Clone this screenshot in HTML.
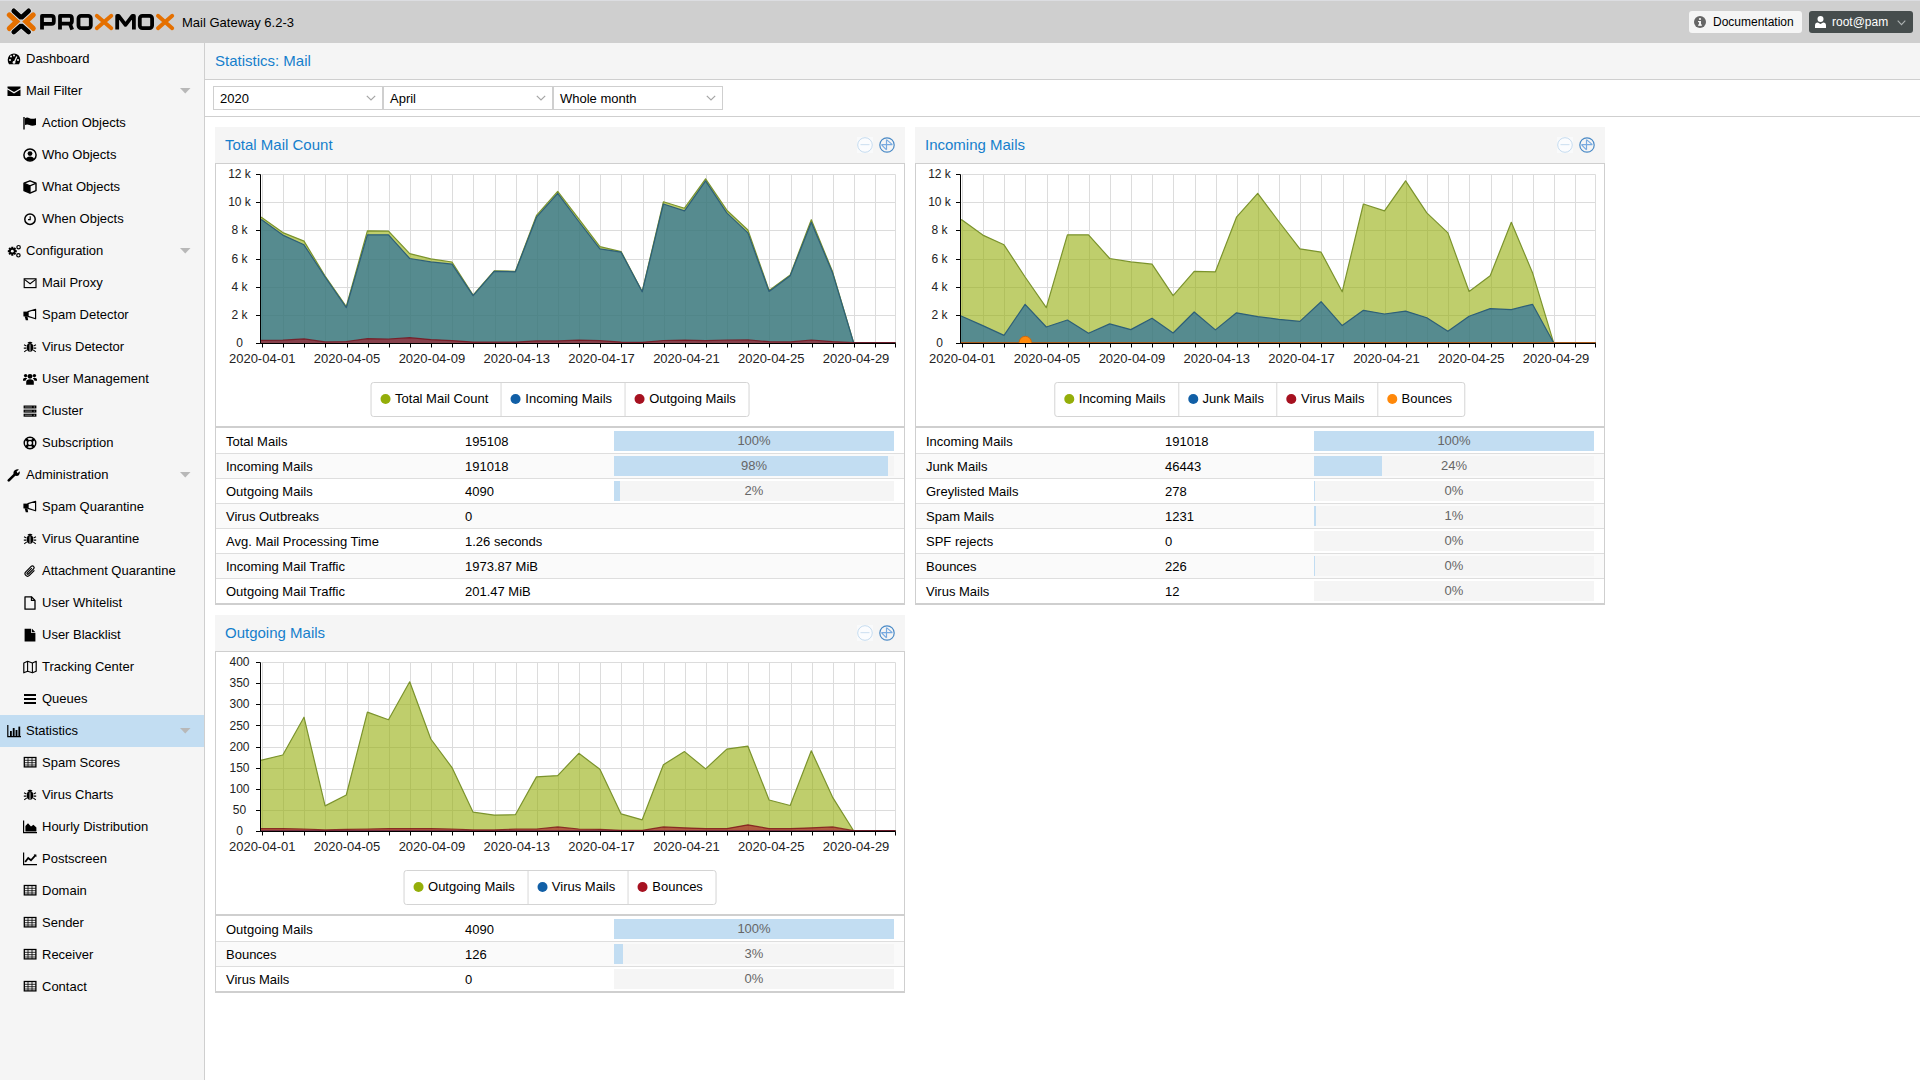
<!DOCTYPE html>
<html><head><meta charset="utf-8"><title>Proxmox Mail Gateway</title><style>
*{box-sizing:border-box}
html,body{margin:0;padding:0;width:1920px;height:1080px;overflow:hidden;background:#fff;font-family:"Liberation Sans", sans-serif;font-size:13px;color:#000}
#hdr{position:absolute;left:0;top:0;width:1920px;height:43px;background:#cfcfcf;border-top:1px solid #dcdde1}
#ver{position:absolute;left:182px;top:14px;font-size:13px;color:#000;line-height:16px}
.hbtn{position:absolute;top:10px;height:22px;border-radius:3px;font-size:12px;line-height:22px}
#doc{left:1689px;width:113px;background:#f5f5f5;color:#000}
#user{left:1809px;width:104px;background:#464d4d;color:#fff}
#side{position:absolute;left:0;top:43px;width:205px;height:1037px;background:#f5f5f5;border-right:1px solid #cfcfcf}
.nr{position:absolute;left:0;width:204px;height:32px}
.nr.sel{background:#c2ddf2}
.ni{position:absolute;top:9px}
.nt{position:absolute;top:8px;line-height:16px;white-space:nowrap}
.exp{position:absolute;left:180px;top:13px}
#ttl{position:absolute;left:205px;top:43px;width:1715px;height:37px;background:#f5f5f5;border-bottom:1px solid #cfcfcf}
#ttl span{position:absolute;left:10px;top:9px;font-size:15px;line-height:18px;color:#157fcc}
#tb{position:absolute;left:205px;top:80px;width:1715px;height:37px;background:#fff;border-bottom:1px solid #cfcfcf}
.cb{position:absolute;top:6px;width:170px;height:24px;border:1px solid #cfcfcf;background:#fff}
.cb span{position:absolute;left:6px;top:4px;line-height:16px;font-size:13px}
.cb svg{position:absolute;right:6px;top:7.5px}
.panel{position:absolute;width:690px}
.ph{position:relative;height:36px;background:#f5f5f5}
.pt{position:absolute;left:10px;top:9px;font-size:15px;line-height:18px;color:#157fcc;white-space:nowrap}
.tool{position:absolute;top:10px}
.pb1{position:relative;height:263px;border:1px solid #cfcfcf;border-bottom:none}
.legend{position:absolute;left:50%;transform:translateX(-50%);height:35px;border:1px solid #d4d4d4;border-radius:3px;display:flex;white-space:nowrap;background:#fff}
.li{height:33px;line-height:31px;padding:0 12.6px 0 9px;border-left:1px solid #d8d8d8;font-size:13px;color:#000}
.li.first{border-left:none}
.dot{display:inline-block;width:10px;height:10px;border-radius:50%;margin-right:4.5px;vertical-align:-1px}
.tbl{border:1px solid #cfcfcf;border-top:2px solid #cfcfcf;border-bottom:2px solid #cfcfcf}
.tr{position:relative;height:25px;border-top:1px solid #dedede;background:#fff}
.tr:first-child{border-top:none;height:25px}
.tr:first-child .c1,.tr:first-child .c2{top:6px}
.tr:first-child .pb{top:3px}
.tr.alt{background:#fafafa}
.c1{position:absolute;left:10px;top:5px;line-height:15px;white-space:nowrap}
.c2{position:absolute;left:249px;top:5px;line-height:15px;white-space:nowrap}
.pb{position:absolute;left:398px;top:2px;width:280px;height:20px;background:#f5f5f5}
.pbf{position:absolute;left:0;top:0;height:20px;background:#c2ddf2}
.pbt{position:absolute;left:0;top:0;width:280px;text-align:center;line-height:20px;color:#666;font-size:13px}
</style></head>
<body>
<div id="hdr"><svg style="position:absolute;left:0;top:-1px" width="180" height="43" viewBox="0 0 180 43"><path d="M9.4,14.9L16.6,21.6L9.4,28.4M33.2,14.9L26.0,21.6L33.2,28.4" stroke="#e57000" stroke-width="5.2" fill="none" stroke-linecap="round" stroke-linejoin="miter" stroke-miterlimit="10"/><path d="M13.8,10.9L21.2,17.8L28.6,10.9M13.8,32.0L21.2,25.5L28.6,32.0" stroke="#e6e6e6" stroke-width="6.0" fill="none" stroke-linecap="round" stroke-linejoin="bevel"/><path d="M13.8,10.9L21.2,17.8L28.6,10.9M13.8,32.0L21.2,25.5L28.6,32.0" stroke="#000" stroke-width="4.8" fill="none" stroke-linecap="round" stroke-linejoin="bevel"/><path d="M42,29.6V15.9H51.4Q53.8,15.9 53.8,18.3V21.5Q53.8,23.9 51.4,23.9H42" stroke="#000" stroke-width="3.8" fill="none" stroke-linejoin="round"/><path d="M60,29.6V15.9H69.5Q71.9,15.9 71.9,18.3V21.3Q71.9,23.6 69.5,23.6H61.5L69.8,23.6L72.2,29.6" stroke="#000" stroke-width="3.8" fill="none" stroke-linejoin="round"/><rect x="78.5" y="15.9" width="12.3" height="12.2" rx="2.6" stroke="#000" stroke-width="3.8" fill="none" stroke-linejoin="round"/><path d="M96.8,15.8L111.3,28.2M111.3,15.8L96.8,28.2" stroke="#e57000" stroke-width="3.9" stroke-linecap="round"/><path d="M117.2,29.6V15.9H118.6L125.5,24.8L132.4,15.9H133.9V29.6" stroke="#000" stroke-width="3.8" fill="none" stroke-linejoin="round"/><rect x="139.8" y="15.9" width="12.3" height="12.2" rx="2.6" stroke="#000" stroke-width="3.8" fill="none" stroke-linejoin="round"/><path d="M158,15.8L172.2,28.2M172.2,15.8L158,28.2" stroke="#e57000" stroke-width="3.9" stroke-linecap="round"/></svg><span id="ver">Mail Gateway 6.2-3</span>
<div class="hbtn" id="doc"><svg style="position:absolute;left:5px;top:5px" width="12" height="12" viewBox="0 0 12 12"><circle cx="6" cy="6" r="6" fill="#666"/><rect x="5" y="5" width="2" height="4.5" fill="#f5f5f5"/><rect x="4" y="8.5" width="4" height="1.2" fill="#f5f5f5"/><rect x="4" y="5" width="2" height="1.2" fill="#f5f5f5"/><circle cx="6" cy="3" r="1.1" fill="#f5f5f5"/></svg><span style="position:absolute;left:24px;top:0">Documentation</span></div>
<div class="hbtn" id="user"><svg style="position:absolute;left:6px;top:5px" width="11" height="12" viewBox="0 0 11 12"><circle cx="5.5" cy="3" r="3" fill="#fff"/><path d="M0,12V9.5Q0,6.8 2.8,6.6L5.5,8L8.2,6.6Q11,6.8 11,9.5V12Z" fill="#fff"/></svg><span style="position:absolute;left:23px;top:0">root@pam</span><svg style="position:absolute;left:88px;top:9px" width="9" height="6" viewBox="0 0 9 6"><path d="M0.7,0.7L4.5,4.6L8.3,0.7" stroke="#aeb3b3" stroke-width="1.1" fill="none"/></svg></div>
</div>
<div id="side"><div class="nr" style="top:0px"><svg class="ni" style="left:7px" width="14" height="14" viewBox="0 0 14 14"><path d="M7,1.5A6.3,6.3 0 0 0 0.7,7.8Q0.7,10.5 2,12.2H12Q13.3,10.5 13.3,7.8A6.3,6.3 0 0 0 7,1.5Z" fill="#000"/><circle cx="3" cy="8" r="1" fill="#f5f5f5"/><circle cx="4" cy="4.6" r="1" fill="#f5f5f5"/><circle cx="7" cy="3.4" r="1" fill="#f5f5f5"/><circle cx="11" cy="8" r="1" fill="#f5f5f5"/><path d="M7.2,10.5L9.8,4.6" stroke="#f5f5f5" stroke-width="1.3"/><circle cx="7" cy="10.4" r="1.4" fill="#f5f5f5"/></svg><span class="nt" style="left:26px">Dashboard</span></div><div class="nr" style="top:32px"><svg class="ni" style="left:7px" width="14" height="14" viewBox="0 0 14 14"><path d="M0.5,2.5H13.5V4.2L7,8L0.5,4.2Z" fill="#000"/><path d="M0.5,5.6L7,9.4L13.5,5.6V12H0.5Z" fill="#000"/></svg><span class="nt" style="left:26px">Mail Filter</span><svg class="exp" width="11" height="6" viewBox="0 0 11 6"><path d="M0,0H10.5L5.25,5.6Z" fill="#b8b8b8"/></svg></div><div class="nr" style="top:64px"><svg class="ni" style="left:23px" width="14" height="14" viewBox="0 0 14 14"><path d="M1,1V13.5" stroke="#000" stroke-width="1.4"/><path d="M2,2.2Q4,1 6.5,2.2Q9,3.4 13,2.2V9Q9,10.3 6.5,9Q4,7.8 2,9Z" fill="#000"/></svg><span class="nt" style="left:42px">Action Objects</span></div><div class="nr" style="top:96px"><svg class="ni" style="left:23px" width="14" height="14" viewBox="0 0 14 14"><circle cx="7" cy="7" r="6.1" fill="none" stroke="#000" stroke-width="1.5"/><circle cx="7" cy="5.6" r="2.4" fill="#000"/><path d="M2.8,11.3Q3.6,8.6 7,8.6Q10.4,8.6 11.2,11.3Q9.5,12.8 7,12.8Q4.5,12.8 2.8,11.3Z" fill="#000"/></svg><span class="nt" style="left:42px">Who Objects</span></div><div class="nr" style="top:128px"><svg class="ni" style="left:23px" width="14" height="14" viewBox="0 0 14 14"><path d="M7,0.8L13,3.2V10.6L7,13.2L1,10.6V3.2Z" fill="none" stroke="#000" stroke-width="1.4" stroke-linejoin="round"/><path d="M1.3,3.4L7,5.8L12.7,3.4M7,5.8V13" stroke="#000" stroke-width="1.3" fill="none"/><path d="M1,3.5L7,6V13L1,10.5Z" fill="#000"/></svg><span class="nt" style="left:42px">What Objects</span></div><div class="nr" style="top:160px"><svg class="ni" style="left:23px" width="14" height="14" viewBox="0 0 14 14"><circle cx="7" cy="7.2" r="5.2" fill="none" stroke="#000" stroke-width="1.5"/><path d="M7.2,4.2V7.6H5" stroke="#000" stroke-width="1.2" fill="none"/></svg><span class="nt" style="left:42px">When Objects</span></div><div class="nr" style="top:192px"><svg class="ni" style="left:7px" width="14" height="14" viewBox="0 0 14 14"><path d="M9.79,6.20L9.79,8.20L8.29,8.33L8.21,8.52L9.18,9.66L7.76,11.08L6.62,10.11L6.43,10.19L6.30,11.69L4.30,11.69L4.17,10.19L3.98,10.11L2.84,11.08L1.42,9.66L2.39,8.52L2.31,8.33L0.81,8.20L0.81,6.20L2.31,6.07L2.39,5.88L1.42,4.74L2.84,3.32L3.98,4.29L4.17,4.21L4.30,2.71L6.30,2.71L6.43,4.21L6.62,4.29L7.76,3.32L9.18,4.74L8.21,5.88L8.29,6.07Z" fill="#000"/><circle cx="5.3" cy="7.2" r="1.4" fill="#f5f5f5"/><circle cx="11.6" cy="3.2" r="1.7" fill="none" stroke="#000" stroke-width="1.2"/><circle cx="11.4" cy="11.3" r="1.7" fill="none" stroke="#000" stroke-width="1.2"/></svg><span class="nt" style="left:26px">Configuration</span><svg class="exp" width="11" height="6" viewBox="0 0 11 6"><path d="M0,0H10.5L5.25,5.6Z" fill="#b8b8b8"/></svg></div><div class="nr" style="top:224px"><svg class="ni" style="left:23px" width="14" height="14" viewBox="0 0 14 14"><rect x="1.2" y="2.8" width="11.8" height="8.8" fill="none" stroke="#000" stroke-width="1.15"/><path d="M1.4,3.4L7.1,7.8L12.8,3.4" stroke="#000" stroke-width="1.1" fill="none"/></svg><span class="nt" style="left:42px">Mail Proxy</span></div><div class="nr" style="top:256px"><svg class="ni" style="left:23px" width="14" height="14" viewBox="0 0 14 14"><path d="M5,3.6L12.6,1.3V10.8L5,8.4Z" fill="none" stroke="#000" stroke-width="1.2" stroke-linejoin="round"/><path d="M0.4,3.6H5.2V8.4H0.4Z" fill="#000"/><path d="M1.6,8.2H4.4L5.2,12.2H2.8Z" fill="#000"/></svg><span class="nt" style="left:42px">Spam Detector</span></div><div class="nr" style="top:288px"><svg class="ni" style="left:23px" width="14" height="14" viewBox="0 0 14 14"><ellipse cx="7" cy="7.4" rx="3.2" ry="4.3" fill="#000"/><path d="M4.3,3.1Q7,0.2 9.7,3.1Z" fill="#000"/><path d="M1,4.8L3.5,5.9M13,4.8L10.5,5.9M0.8,8.1H3.5M13.2,8.1H10.5M1.2,11.9L3.8,9.9M12.8,11.9L10.2,9.9" stroke="#000" stroke-width="1.1"/><path d="M7,4.4V11.4" stroke="#f5f5f5" stroke-width="0.8"/></svg><span class="nt" style="left:42px">Virus Detector</span></div><div class="nr" style="top:320px"><svg class="ni" style="left:23px" width="14" height="14" viewBox="0 0 14 14"><circle cx="7" cy="4.3" r="2.4" fill="#000"/><circle cx="2.6" cy="3.6" r="1.7" fill="#000"/><circle cx="11.4" cy="3.6" r="1.7" fill="#000"/><path d="M3.2,12.8V10Q3.2,7.2 7,7.2Q10.8,7.2 10.8,10V12.8Z" fill="#000"/><path d="M0,8.8V7.5Q0,5.8 2.6,5.8Q3.8,5.8 4.2,6.5Q2.6,7.5 2.5,8.8Z" fill="#000"/><path d="M14,8.8V7.5Q14,5.8 11.4,5.8Q10.2,5.8 9.8,6.5Q11.4,7.5 11.5,8.8Z" fill="#000"/></svg><span class="nt" style="left:42px">User Management</span></div><div class="nr" style="top:352px"><svg class="ni" style="left:23px" width="14" height="14" viewBox="0 0 14 14"><rect x="0.6" y="1.5" width="12.8" height="3" fill="#000"/><rect x="0.6" y="5.6" width="12.8" height="3" fill="#000"/><rect x="0.6" y="9.7" width="12.8" height="3" fill="#000"/><path d="M1.8,3H9M1.8,7.1H9M1.8,11.2H9" stroke="#888" stroke-width="0.9"/><circle cx="11.3" cy="3" r="0.7" fill="#888"/><circle cx="11.3" cy="7.1" r="0.7" fill="#888"/><circle cx="11.3" cy="11.2" r="0.7" fill="#888"/></svg><span class="nt" style="left:42px">Cluster</span></div><div class="nr" style="top:384px"><svg class="ni" style="left:23px" width="14" height="14" viewBox="0 0 14 14"><circle cx="7" cy="7" r="5.8" fill="none" stroke="#000" stroke-width="1.4"/><circle cx="7" cy="7" r="2.6" fill="none" stroke="#000" stroke-width="1.4"/><path d="M2.9,2.9L5.2,5.2M11.1,2.9L8.8,5.2M2.9,11.1L5.2,8.8M11.1,11.1L8.8,8.8" stroke="#000" stroke-width="2.6"/></svg><span class="nt" style="left:42px">Subscription</span></div><div class="nr" style="top:416px"><svg class="ni" style="left:7px" width="14" height="14" viewBox="0 0 14 14"><path d="M1.8,12.4L7.6,6.6" stroke="#000" stroke-width="2.6" stroke-linecap="round"/><path d="M6.6,6.2Q5.8,2.5 9.2,1.4Q10.8,1 12,1.6L9.6,3.6L10.6,5.2L12.6,3.3Q13.4,5.5 12,7Q10.5,8.5 8,7.6Z" fill="#000"/></svg><span class="nt" style="left:26px">Administration</span><svg class="exp" width="11" height="6" viewBox="0 0 11 6"><path d="M0,0H10.5L5.25,5.6Z" fill="#b8b8b8"/></svg></div><div class="nr" style="top:448px"><svg class="ni" style="left:23px" width="14" height="14" viewBox="0 0 14 14"><path d="M5,3.6L12.6,1.3V10.8L5,8.4Z" fill="none" stroke="#000" stroke-width="1.2" stroke-linejoin="round"/><path d="M0.4,3.6H5.2V8.4H0.4Z" fill="#000"/><path d="M1.6,8.2H4.4L5.2,12.2H2.8Z" fill="#000"/></svg><span class="nt" style="left:42px">Spam Quarantine</span></div><div class="nr" style="top:480px"><svg class="ni" style="left:23px" width="14" height="14" viewBox="0 0 14 14"><ellipse cx="7" cy="7.4" rx="3.2" ry="4.3" fill="#000"/><path d="M4.3,3.1Q7,0.2 9.7,3.1Z" fill="#000"/><path d="M1,4.8L3.5,5.9M13,4.8L10.5,5.9M0.8,8.1H3.5M13.2,8.1H10.5M1.2,11.9L3.8,9.9M12.8,11.9L10.2,9.9" stroke="#000" stroke-width="1.1"/><path d="M7,4.4V11.4" stroke="#f5f5f5" stroke-width="0.8"/></svg><span class="nt" style="left:42px">Virus Quarantine</span></div><div class="nr" style="top:512px"><svg class="ni" style="left:23px" width="14" height="14" viewBox="0 0 14 14"><path d="M11.4,6.4L6.4,11.4Q4.6,13.2 2.8,11.4Q1,9.6 2.8,7.8L8.2,2.4Q9.4,1.2 10.6,2.4Q11.8,3.6 10.6,4.8L5.4,10Q4.8,10.6 4.2,10Q3.6,9.4 4.2,8.8L8.8,4.2" fill="none" stroke="#000" stroke-width="1.2"/></svg><span class="nt" style="left:42px">Attachment Quarantine</span></div><div class="nr" style="top:544px"><svg class="ni" style="left:23px" width="14" height="14" viewBox="0 0 14 14"><path d="M2,0.8H8.4L12,4.4V13.2H2Z" fill="none" stroke="#000" stroke-width="1.3" stroke-linejoin="round"/><path d="M8.4,0.8V4.4H12" fill="none" stroke="#000" stroke-width="1.1"/></svg><span class="nt" style="left:42px">User Whitelist</span></div><div class="nr" style="top:576px"><svg class="ni" style="left:23px" width="14" height="14" viewBox="0 0 14 14"><path d="M1.6,0.8H8.2V5H12.4V13.4H1.6Z" fill="#000"/><path d="M9,0.8L12.4,4.2H9Z" fill="#000"/></svg><span class="nt" style="left:42px">User Blacklist</span></div><div class="nr" style="top:608px"><svg class="ni" style="left:23px" width="14" height="14" viewBox="0 0 14 14"><path d="M0.8,3L4.6,1.3L9.4,3L13.2,1.3V11.2L9.4,12.8L4.6,11.2L0.8,12.8Z" fill="none" stroke="#000" stroke-width="1.2" stroke-linejoin="round"/><path d="M4.6,1.5V11M9.4,3V12.6" stroke="#000" stroke-width="1.1"/></svg><span class="nt" style="left:42px">Tracking Center</span></div><div class="nr" style="top:640px"><svg class="ni" style="left:23px" width="14" height="14" viewBox="0 0 14 14"><path d="M1,3H13M1,7H13M1,11H13" stroke="#000" stroke-width="2"/></svg><span class="nt" style="left:42px">Queues</span></div><div class="nr sel" style="top:672px"><svg class="ni" style="left:7px" width="14" height="14" viewBox="0 0 14 14"><path d="M0.8,1V12.7H14" stroke="#000" stroke-width="1.2" fill="none"/><rect x="3" y="7" width="1.8" height="5" fill="#000"/><rect x="5.8" y="4" width="1.8" height="8" fill="#000"/><rect x="8.6" y="6" width="1.8" height="6" fill="#000"/><rect x="11.4" y="2.6" width="1.8" height="9.4" fill="#000"/></svg><span class="nt" style="left:26px">Statistics</span><svg class="exp" width="11" height="6" viewBox="0 0 11 6"><path d="M0,0H10.5L5.25,5.6Z" fill="#b8b8b8"/></svg></div><div class="nr" style="top:704px"><svg class="ni" style="left:23px" width="14" height="14" viewBox="0 0 14 14"><rect x="1.3" y="1.5" width="11.6" height="9.4" fill="none" stroke="#000" stroke-width="1.3"/><path d="M1.3,4.3H12.9M1.3,6.7H12.9M1.3,9H12.9M5,1.5V10.9M9,1.5V10.9" stroke="#000" stroke-width="0.8"/></svg><span class="nt" style="left:42px">Spam Scores</span></div><div class="nr" style="top:736px"><svg class="ni" style="left:23px" width="14" height="14" viewBox="0 0 14 14"><ellipse cx="7" cy="7.4" rx="3.2" ry="4.3" fill="#000"/><path d="M4.3,3.1Q7,0.2 9.7,3.1Z" fill="#000"/><path d="M1,4.8L3.5,5.9M13,4.8L10.5,5.9M0.8,8.1H3.5M13.2,8.1H10.5M1.2,11.9L3.8,9.9M12.8,11.9L10.2,9.9" stroke="#000" stroke-width="1.1"/><path d="M7,4.4V11.4" stroke="#f5f5f5" stroke-width="0.8"/></svg><span class="nt" style="left:42px">Virus Charts</span></div><div class="nr" style="top:768px"><svg class="ni" style="left:23px" width="14" height="14" viewBox="0 0 14 14"><path d="M0.6,0.6V12.6H14" stroke="#000" stroke-width="1.2" fill="none"/><path d="M2.4,11.6V6L5,3.3L8,6.5L10.4,4.8L13.4,7.6V11.6Z" fill="#000"/></svg><span class="nt" style="left:42px">Hourly Distribution</span></div><div class="nr" style="top:800px"><svg class="ni" style="left:23px" width="14" height="14" viewBox="0 0 14 14"><path d="M0.6,0.6V12.6H14" stroke="#000" stroke-width="1.2" fill="none"/><path d="M2.2,10L5.2,6L8,8.3L12.6,3.2" stroke="#000" stroke-width="1.8" fill="none"/><path d="M10.6,2.4H13.4V5.2Z" fill="#000"/></svg><span class="nt" style="left:42px">Postscreen</span></div><div class="nr" style="top:832px"><svg class="ni" style="left:23px" width="14" height="14" viewBox="0 0 14 14"><rect x="1.3" y="1.5" width="11.6" height="9.4" fill="none" stroke="#000" stroke-width="1.3"/><path d="M1.3,4.3H12.9M1.3,6.7H12.9M1.3,9H12.9M5,1.5V10.9M9,1.5V10.9" stroke="#000" stroke-width="0.8"/></svg><span class="nt" style="left:42px">Domain</span></div><div class="nr" style="top:864px"><svg class="ni" style="left:23px" width="14" height="14" viewBox="0 0 14 14"><rect x="1.3" y="1.5" width="11.6" height="9.4" fill="none" stroke="#000" stroke-width="1.3"/><path d="M1.3,4.3H12.9M1.3,6.7H12.9M1.3,9H12.9M5,1.5V10.9M9,1.5V10.9" stroke="#000" stroke-width="0.8"/></svg><span class="nt" style="left:42px">Sender</span></div><div class="nr" style="top:896px"><svg class="ni" style="left:23px" width="14" height="14" viewBox="0 0 14 14"><rect x="1.3" y="1.5" width="11.6" height="9.4" fill="none" stroke="#000" stroke-width="1.3"/><path d="M1.3,4.3H12.9M1.3,6.7H12.9M1.3,9H12.9M5,1.5V10.9M9,1.5V10.9" stroke="#000" stroke-width="0.8"/></svg><span class="nt" style="left:42px">Receiver</span></div><div class="nr" style="top:928px"><svg class="ni" style="left:23px" width="14" height="14" viewBox="0 0 14 14"><rect x="1.3" y="1.5" width="11.6" height="9.4" fill="none" stroke="#000" stroke-width="1.3"/><path d="M1.3,4.3H12.9M1.3,6.7H12.9M1.3,9H12.9M5,1.5V10.9M9,1.5V10.9" stroke="#000" stroke-width="0.8"/></svg><span class="nt" style="left:42px">Contact</span></div></div>
<div id="ttl"><span>Statistics: Mail</span></div>
<div id="tb">
<div class="cb" style="left:8px"><span>2020</span><svg width="10" height="6" viewBox="0 0 10 6"><path d="M0.8,0.8L5,5L9.2,0.8" stroke="#a6a6a6" stroke-width="1.2" fill="none"/></svg></div>
<div class="cb" style="left:178px"><span>April</span><svg width="10" height="6" viewBox="0 0 10 6"><path d="M0.8,0.8L5,5L9.2,0.8" stroke="#a6a6a6" stroke-width="1.2" fill="none"/></svg></div>
<div class="cb" style="left:348px"><span>Whole month</span><svg width="10" height="6" viewBox="0 0 10 6"><path d="M0.8,0.8L5,5L9.2,0.8" stroke="#a6a6a6" stroke-width="1.2" fill="none"/></svg></div>
</div>
<div class="panel" style="left:215px;top:127px">
<div class="ph"><span class="pt">Total Mail Count</span>
<svg class="tool" style="left:642px" width="16" height="16" viewBox="0 0 16 16"><rect x="0" y="0" width="16" height="16" fill="#f9fafb"/><circle cx="8" cy="8" r="7.3" fill="#fbfcfe" stroke="#c5dbef" stroke-width="1"/><path d="M3.5,7.6H12.5" stroke="#d3e3f2" stroke-width="1.2"/></svg>
<svg class="tool" style="left:664px" width="16" height="16" viewBox="0 0 16 16"><circle cx="8" cy="8" r="7.2" fill="none" stroke="#4a8ac6" stroke-width="1.2"/><path d="M7.5,2.6V12.8M2.4,7.6H13.4M7.5,2.6L13.4,7.6M2.4,7.6L7.5,12.8" stroke="#78aae0" stroke-width="1.2" fill="none" stroke-linejoin="round"/></svg>
</div>
<div class="pb1"><svg width="690" height="264" style="position:absolute;left:-1px;top:-1px"><path d="M46.5,180.5H680.5M46.5,152.5H680.5M46.5,124.5H680.5M46.5,96.5H680.5M46.5,67.5H680.5M46.5,39.5H680.5M46.5,11.5H680.5M47.5,11.5V180.5M68.5,11.5V180.5M89.5,11.5V180.5M110.5,11.5V180.5M132.5,11.5V180.5M153.5,11.5V180.5M174.5,11.5V180.5M195.5,11.5V180.5M216.5,11.5V180.5M237.5,11.5V180.5M258.5,11.5V180.5M280.5,11.5V180.5M301.5,11.5V180.5M322.5,11.5V180.5M343.5,11.5V180.5M364.5,11.5V180.5M385.5,11.5V180.5M406.5,11.5V180.5M428.5,11.5V180.5M449.5,11.5V180.5M470.5,11.5V180.5M491.5,11.5V180.5M512.5,11.5V180.5M533.5,11.5V180.5M554.5,11.5V180.5M576.5,11.5V180.5M597.5,11.5V180.5M618.5,11.5V180.5M639.5,11.5V180.5M660.5,11.5V180.5M680.5,11.5V180.5" stroke="#dcdcdc" stroke-width="1" fill="none"/><path d="M45.5,180.5L45.5,54.4L46.7,54.4L67.8,69.6L89.0,78.1L110.1,113.1L131.3,143.5L152.4,67.8L173.5,68.1L194.7,90.6L215.8,95.9L237.0,99.0L258.1,132.1L279.2,107.8L300.4,108.3L321.5,52.4L342.7,28.4L363.8,55.9L384.9,83.7L406.1,88.6L427.2,128.5L448.4,38.8L469.5,45.2L490.6,15.8L511.8,47.2L532.9,67.0L554.1,127.4L575.2,111.9L596.3,56.7L617.5,108.6L638.6,179.7L659.8,179.7L680.5,179.7L680.5,180.5Z" fill="rgba(148,174,10,0.6)" stroke="none"/><path d="M45.5,54.4L46.7,54.4L67.8,69.6L89.0,78.1L110.1,113.1L131.3,143.5L152.4,67.8L173.5,68.1L194.7,90.6L215.8,95.9L237.0,99.0L258.1,132.1L279.2,107.8L300.4,108.3L321.5,52.4L342.7,28.4L363.8,55.9L384.9,83.7L406.1,88.6L427.2,128.5L448.4,38.8L469.5,45.2L490.6,15.8L511.8,47.2L532.9,67.0L554.1,127.4L575.2,111.9L596.3,56.7L617.5,108.6L638.6,179.7L659.8,179.7L680.5,179.7" fill="none" stroke="#7b932c" stroke-width="1.2" stroke-linejoin="round"/><path d="M45.5,180.5L45.5,56.8L46.7,56.8L67.8,72.1L89.0,81.8L110.1,114.0L131.3,144.7L152.4,71.8L173.5,71.8L194.7,95.5L215.8,98.9L237.0,101.2L258.1,132.7L279.2,108.3L300.4,108.8L321.5,54.2L342.7,30.3L363.8,58.5L384.9,85.8L406.1,89.2L427.2,128.8L448.4,41.0L469.5,47.9L490.6,17.8L511.8,49.9L532.9,69.9L554.1,128.5L575.2,112.8L596.3,59.3L617.5,109.7L638.6,179.7L659.8,179.7L680.5,179.7L680.5,180.5Z" fill="rgba(17,95,166,0.6)" stroke="none"/><path d="M45.5,56.8L46.7,56.8L67.8,72.1L89.0,81.8L110.1,114.0L131.3,144.7L152.4,71.8L173.5,71.8L194.7,95.5L215.8,98.9L237.0,101.2L258.1,132.7L279.2,108.3L300.4,108.8L321.5,54.2L342.7,30.3L363.8,58.5L384.9,85.8L406.1,89.2L427.2,128.8L448.4,41.0L469.5,47.9L490.6,17.8L511.8,49.9L532.9,69.9L554.1,128.5L575.2,112.8L596.3,59.3L617.5,109.7L638.6,179.7L659.8,179.7L680.5,179.7" fill="none" stroke="#2d5f78" stroke-width="1.2" stroke-linejoin="round"/><path d="M45.5,180.5L45.5,177.3L46.7,177.3L67.8,177.2L89.0,175.9L110.1,178.9L131.3,178.5L152.4,175.7L173.5,176.0L194.7,174.7L215.8,176.6L237.0,177.6L258.1,179.1L279.2,179.2L300.4,179.2L321.5,177.9L342.7,177.9L363.8,177.1L384.9,177.7L406.1,179.1L427.2,179.3L448.4,177.5L469.5,177.1L490.6,177.6L511.8,177.0L532.9,176.9L554.1,178.7L575.2,178.9L596.3,177.0L617.5,178.6L638.6,179.7L659.8,179.7L680.5,179.7L680.5,180.5Z" fill="rgba(166,17,32,0.6)" stroke="none"/><path d="M45.5,177.3L46.7,177.3L67.8,177.2L89.0,175.9L110.1,178.9L131.3,178.5L152.4,175.7L173.5,176.0L194.7,174.7L215.8,176.6L237.0,177.6L258.1,179.1L279.2,179.2L300.4,179.2L321.5,177.9L342.7,177.9L363.8,177.1L384.9,177.7L406.1,179.1L427.2,179.3L448.4,177.5L469.5,177.1L490.6,177.6L511.8,177.0L532.9,176.9L554.1,178.7L575.2,178.9L596.3,177.0L617.5,178.6L638.6,179.7L659.8,179.7L680.5,179.7" fill="none" stroke="rgba(120,10,20,0.75)" stroke-width="1.2" stroke-linejoin="round"/><path d="M45.5,11.5V180.5H680.5M41.0,180.5H45.5M41.0,152.5H45.5M41.0,124.5H45.5M41.0,96.5H45.5M41.0,67.5H45.5M41.0,39.5H45.5M41.0,11.5H45.5M47.5,180.5V184.5M68.5,180.5V184.5M89.5,180.5V184.5M110.5,180.5V184.5M132.5,180.5V184.5M153.5,180.5V184.5M174.5,180.5V184.5M195.5,180.5V184.5M216.5,180.5V184.5M237.5,180.5V184.5M258.5,180.5V184.5M280.5,180.5V184.5M301.5,180.5V184.5M322.5,180.5V184.5M343.5,180.5V184.5M364.5,180.5V184.5M385.5,180.5V184.5M406.5,180.5V184.5M428.5,180.5V184.5M449.5,180.5V184.5M470.5,180.5V184.5M491.5,180.5V184.5M512.5,180.5V184.5M533.5,180.5V184.5M554.5,180.5V184.5M576.5,180.5V184.5M597.5,180.5V184.5M618.5,180.5V184.5M639.5,180.5V184.5M660.5,180.5V184.5M680.5,180.5V184.5" stroke="#000" stroke-width="1" fill="none"/><text x="24.5" y="184.1" text-anchor="middle" font-family="Liberation Sans" font-size="12" fill="#222">0</text><text x="24.5" y="155.9" text-anchor="middle" font-family="Liberation Sans" font-size="12" fill="#222">2 k</text><text x="24.5" y="127.8" text-anchor="middle" font-family="Liberation Sans" font-size="12" fill="#222">4 k</text><text x="24.5" y="99.6" text-anchor="middle" font-family="Liberation Sans" font-size="12" fill="#222">6 k</text><text x="24.5" y="71.4" text-anchor="middle" font-family="Liberation Sans" font-size="12" fill="#222">8 k</text><text x="24.5" y="43.3" text-anchor="middle" font-family="Liberation Sans" font-size="12" fill="#222">10 k</text><text x="24.5" y="15.1" text-anchor="middle" font-family="Liberation Sans" font-size="12" fill="#222">12 k</text><text x="47.2" y="200.0" text-anchor="middle" font-family="Liberation Sans" font-size="13" fill="#222">2020-04-01</text><text x="132.0" y="200.0" text-anchor="middle" font-family="Liberation Sans" font-size="13" fill="#222">2020-04-05</text><text x="216.9" y="200.0" text-anchor="middle" font-family="Liberation Sans" font-size="13" fill="#222">2020-04-09</text><text x="301.7" y="200.0" text-anchor="middle" font-family="Liberation Sans" font-size="13" fill="#222">2020-04-13</text><text x="386.6" y="200.0" text-anchor="middle" font-family="Liberation Sans" font-size="13" fill="#222">2020-04-17</text><text x="471.4" y="200.0" text-anchor="middle" font-family="Liberation Sans" font-size="13" fill="#222">2020-04-21</text><text x="556.2" y="200.0" text-anchor="middle" font-family="Liberation Sans" font-size="13" fill="#222">2020-04-25</text><text x="641.1" y="200.0" text-anchor="middle" font-family="Liberation Sans" font-size="13" fill="#222">2020-04-29</text></svg><div class="legend" style="top:218px"><div class="li first"><span class="dot" style="background:#94ae0a"></span>Total Mail Count</div><div class="li"><span class="dot" style="background:#115fa6"></span>Incoming Mails</div><div class="li"><span class="dot" style="background:#a61120"></span>Outgoing Mails</div></div></div>
<div class="tbl"><div class="tr"><span class="c1">Total Mails</span><span class="c2">195108</span><span class="pb"><span class="pbf" style="width:280px"></span><span class="pbt">100%</span></span></div><div class="tr alt"><span class="c1">Incoming Mails</span><span class="c2">191018</span><span class="pb"><span class="pbf" style="width:274px"></span><span class="pbt">98%</span></span></div><div class="tr"><span class="c1">Outgoing Mails</span><span class="c2">4090</span><span class="pb"><span class="pbf" style="width:6px"></span><span class="pbt">2%</span></span></div><div class="tr alt"><span class="c1">Virus Outbreaks</span><span class="c2">0</span></div><div class="tr"><span class="c1">Avg. Mail Processing Time</span><span class="c2">1.26 seconds</span></div><div class="tr alt"><span class="c1">Incoming Mail Traffic</span><span class="c2">1973.87 MiB</span></div><div class="tr"><span class="c1">Outgoing Mail Traffic</span><span class="c2">201.47 MiB</span></div></div>
</div>
<div class="panel" style="left:915px;top:127px">
<div class="ph"><span class="pt">Incoming Mails</span>
<svg class="tool" style="left:642px" width="16" height="16" viewBox="0 0 16 16"><rect x="0" y="0" width="16" height="16" fill="#f9fafb"/><circle cx="8" cy="8" r="7.3" fill="#fbfcfe" stroke="#c5dbef" stroke-width="1"/><path d="M3.5,7.6H12.5" stroke="#d3e3f2" stroke-width="1.2"/></svg>
<svg class="tool" style="left:664px" width="16" height="16" viewBox="0 0 16 16"><circle cx="8" cy="8" r="7.2" fill="none" stroke="#4a8ac6" stroke-width="1.2"/><path d="M7.5,2.6V12.8M2.4,7.6H13.4M7.5,2.6L13.4,7.6M2.4,7.6L7.5,12.8" stroke="#78aae0" stroke-width="1.2" fill="none" stroke-linejoin="round"/></svg>
</div>
<div class="pb1"><svg width="690" height="264" style="position:absolute;left:-1px;top:-1px"><path d="M46.5,180.5H680.5M46.5,152.5H680.5M46.5,124.5H680.5M46.5,96.5H680.5M46.5,67.5H680.5M46.5,39.5H680.5M46.5,11.5H680.5M47.5,11.5V180.5M68.5,11.5V180.5M89.5,11.5V180.5M110.5,11.5V180.5M132.5,11.5V180.5M153.5,11.5V180.5M174.5,11.5V180.5M195.5,11.5V180.5M216.5,11.5V180.5M237.5,11.5V180.5M258.5,11.5V180.5M280.5,11.5V180.5M301.5,11.5V180.5M322.5,11.5V180.5M343.5,11.5V180.5M364.5,11.5V180.5M385.5,11.5V180.5M406.5,11.5V180.5M428.5,11.5V180.5M449.5,11.5V180.5M470.5,11.5V180.5M491.5,11.5V180.5M512.5,11.5V180.5M533.5,11.5V180.5M554.5,11.5V180.5M576.5,11.5V180.5M597.5,11.5V180.5M618.5,11.5V180.5M639.5,11.5V180.5M660.5,11.5V180.5M680.5,11.5V180.5" stroke="#dcdcdc" stroke-width="1" fill="none"/><path d="M45.5,180.5L45.5,56.8L46.7,56.8L67.8,72.1L89.0,81.8L110.1,114.0L131.3,144.7L152.4,71.8L173.5,71.8L194.7,95.5L215.8,98.9L237.0,101.2L258.1,132.7L279.2,108.3L300.4,108.8L321.5,54.2L342.7,30.3L363.8,58.5L384.9,85.8L406.1,89.2L427.2,128.8L448.4,41.0L469.5,47.9L490.6,17.8L511.8,49.9L532.9,69.9L554.1,128.5L575.2,112.8L596.3,59.3L617.5,109.7L638.6,179.7L659.8,179.7L680.5,179.7L680.5,180.5Z" fill="rgba(148,174,10,0.6)" stroke="none"/><path d="M45.5,56.8L46.7,56.8L67.8,72.1L89.0,81.8L110.1,114.0L131.3,144.7L152.4,71.8L173.5,71.8L194.7,95.5L215.8,98.9L237.0,101.2L258.1,132.7L279.2,108.3L300.4,108.8L321.5,54.2L342.7,30.3L363.8,58.5L384.9,85.8L406.1,89.2L427.2,128.8L448.4,41.0L469.5,47.9L490.6,17.8L511.8,49.9L532.9,69.9L554.1,128.5L575.2,112.8L596.3,59.3L617.5,109.7L638.6,179.7L659.8,179.7L680.5,179.7" fill="none" stroke="#7b932c" stroke-width="1.2" stroke-linejoin="round"/><path d="M45.5,180.5L45.5,153.2L46.7,153.2L67.8,162.6L89.0,172.4L110.1,141.3L131.3,164.0L152.4,157.0L173.5,170.3L194.7,160.9L215.8,166.6L237.0,155.3L258.1,170.0L279.2,149.0L300.4,166.9L321.5,149.8L342.7,153.7L363.8,156.3L384.9,158.4L406.1,138.7L427.2,162.6L448.4,147.3L469.5,151.0L490.6,148.1L511.8,154.8L532.9,168.3L554.1,153.2L575.2,145.6L596.3,146.7L617.5,141.3L638.6,179.7L659.8,179.7L680.5,179.7L680.5,180.5Z" fill="rgba(17,95,166,0.6)" stroke="none"/><path d="M45.5,153.2L46.7,153.2L67.8,162.6L89.0,172.4L110.1,141.3L131.3,164.0L152.4,157.0L173.5,170.3L194.7,160.9L215.8,166.6L237.0,155.3L258.1,170.0L279.2,149.0L300.4,166.9L321.5,149.8L342.7,153.7L363.8,156.3L384.9,158.4L406.1,138.7L427.2,162.6L448.4,147.3L469.5,151.0L490.6,148.1L511.8,154.8L532.9,168.3L554.1,153.2L575.2,145.6L596.3,146.7L617.5,141.3L638.6,179.7L659.8,179.7L680.5,179.7" fill="none" stroke="#2d5f78" stroke-width="1.2" stroke-linejoin="round"/><path d="M45.5,180.5L45.5,179.7L46.7,179.7L67.8,179.7L89.0,179.7L110.1,179.7L131.3,179.7L152.4,179.7L173.5,179.7L194.7,179.7L215.8,179.7L237.0,179.7L258.1,179.7L279.2,179.7L300.4,179.7L321.5,179.7L342.7,179.7L363.8,179.7L384.9,179.7L406.1,179.7L427.2,179.7L448.4,179.7L469.5,179.7L490.6,179.7L511.8,179.7L532.9,179.7L554.1,179.7L575.2,179.7L596.3,179.7L617.5,179.7L638.6,179.7L659.8,179.7L680.5,179.7L680.5,180.5Z" fill="rgba(166,17,32,0.6)" stroke="none"/><path d="M45.5,179.7L46.7,179.7L67.8,179.7L89.0,179.7L110.1,179.7L131.3,179.7L152.4,179.7L173.5,179.7L194.7,179.7L215.8,179.7L237.0,179.7L258.1,179.7L279.2,179.7L300.4,179.7L321.5,179.7L342.7,179.7L363.8,179.7L384.9,179.7L406.1,179.7L427.2,179.7L448.4,179.7L469.5,179.7L490.6,179.7L511.8,179.7L532.9,179.7L554.1,179.7L575.2,179.7L596.3,179.7L617.5,179.7L638.6,179.7L659.8,179.7L680.5,179.7" fill="none" stroke="rgba(120,10,20,0.75)" stroke-width="1.2" stroke-linejoin="round"/><path d="M45.5,180.5L45.5,179.7L46.7,179.7L67.8,179.7L89.0,179.7L110.1,179.7L131.3,179.7L152.4,179.7L173.5,179.7L194.7,179.7L215.8,179.7L237.0,179.7L258.1,179.7L279.2,179.7L300.4,179.7L321.5,179.7L342.7,179.7L363.8,179.7L384.9,179.7L406.1,179.7L427.2,179.7L448.4,179.7L469.5,179.7L490.6,179.7L511.8,179.7L532.9,179.7L554.1,179.7L575.2,179.7L596.3,179.7L617.5,179.7L638.6,179.7L659.8,179.7L680.5,179.7L680.5,180.5Z" fill="rgba(255,136,9,0.6)" stroke="none"/><path d="M45.5,179.7L46.7,179.7L67.8,179.7L89.0,179.7L110.1,179.7L131.3,179.7L152.4,179.7L173.5,179.7L194.7,179.7L215.8,179.7L237.0,179.7L258.1,179.7L279.2,179.7L300.4,179.7L321.5,179.7L342.7,179.7L363.8,179.7L384.9,179.7L406.1,179.7L427.2,179.7L448.4,179.7L469.5,179.7L490.6,179.7L511.8,179.7L532.9,179.7L554.1,179.7L575.2,179.7L596.3,179.7L617.5,179.7L638.6,179.7L659.8,179.7L680.5,179.7" fill="none" stroke="#a65a1c" stroke-width="1.2" stroke-linejoin="round"/><circle cx="110.3" cy="179.5" r="6.2" fill="#ff8a0c" stroke="#cc6a10" stroke-width="1"/><rect x="45.5" y="181.0" width="635.0" height="6" fill="#fff"/><path d="M45.5,11.5V180.5H680.5M41.0,180.5H45.5M41.0,152.5H45.5M41.0,124.5H45.5M41.0,96.5H45.5M41.0,67.5H45.5M41.0,39.5H45.5M41.0,11.5H45.5M47.5,180.5V184.5M68.5,180.5V184.5M89.5,180.5V184.5M110.5,180.5V184.5M132.5,180.5V184.5M153.5,180.5V184.5M174.5,180.5V184.5M195.5,180.5V184.5M216.5,180.5V184.5M237.5,180.5V184.5M258.5,180.5V184.5M280.5,180.5V184.5M301.5,180.5V184.5M322.5,180.5V184.5M343.5,180.5V184.5M364.5,180.5V184.5M385.5,180.5V184.5M406.5,180.5V184.5M428.5,180.5V184.5M449.5,180.5V184.5M470.5,180.5V184.5M491.5,180.5V184.5M512.5,180.5V184.5M533.5,180.5V184.5M554.5,180.5V184.5M576.5,180.5V184.5M597.5,180.5V184.5M618.5,180.5V184.5M639.5,180.5V184.5M660.5,180.5V184.5M680.5,180.5V184.5" stroke="#000" stroke-width="1" fill="none"/><text x="24.5" y="184.1" text-anchor="middle" font-family="Liberation Sans" font-size="12" fill="#222">0</text><text x="24.5" y="155.9" text-anchor="middle" font-family="Liberation Sans" font-size="12" fill="#222">2 k</text><text x="24.5" y="127.8" text-anchor="middle" font-family="Liberation Sans" font-size="12" fill="#222">4 k</text><text x="24.5" y="99.6" text-anchor="middle" font-family="Liberation Sans" font-size="12" fill="#222">6 k</text><text x="24.5" y="71.4" text-anchor="middle" font-family="Liberation Sans" font-size="12" fill="#222">8 k</text><text x="24.5" y="43.3" text-anchor="middle" font-family="Liberation Sans" font-size="12" fill="#222">10 k</text><text x="24.5" y="15.1" text-anchor="middle" font-family="Liberation Sans" font-size="12" fill="#222">12 k</text><text x="47.2" y="200.0" text-anchor="middle" font-family="Liberation Sans" font-size="13" fill="#222">2020-04-01</text><text x="132.0" y="200.0" text-anchor="middle" font-family="Liberation Sans" font-size="13" fill="#222">2020-04-05</text><text x="216.9" y="200.0" text-anchor="middle" font-family="Liberation Sans" font-size="13" fill="#222">2020-04-09</text><text x="301.7" y="200.0" text-anchor="middle" font-family="Liberation Sans" font-size="13" fill="#222">2020-04-13</text><text x="386.6" y="200.0" text-anchor="middle" font-family="Liberation Sans" font-size="13" fill="#222">2020-04-17</text><text x="471.4" y="200.0" text-anchor="middle" font-family="Liberation Sans" font-size="13" fill="#222">2020-04-21</text><text x="556.2" y="200.0" text-anchor="middle" font-family="Liberation Sans" font-size="13" fill="#222">2020-04-25</text><text x="641.1" y="200.0" text-anchor="middle" font-family="Liberation Sans" font-size="13" fill="#222">2020-04-29</text></svg><div class="legend" style="top:218px"><div class="li first"><span class="dot" style="background:#94ae0a"></span>Incoming Mails</div><div class="li"><span class="dot" style="background:#115fa6"></span>Junk Mails</div><div class="li"><span class="dot" style="background:#a61120"></span>Virus Mails</div><div class="li"><span class="dot" style="background:#ff8809"></span>Bounces</div></div></div>
<div class="tbl"><div class="tr"><span class="c1">Incoming Mails</span><span class="c2">191018</span><span class="pb"><span class="pbf" style="width:280px"></span><span class="pbt">100%</span></span></div><div class="tr alt"><span class="c1">Junk Mails</span><span class="c2">46443</span><span class="pb"><span class="pbf" style="width:68px"></span><span class="pbt">24%</span></span></div><div class="tr"><span class="c1">Greylisted Mails</span><span class="c2">278</span><span class="pb"><span class="pbf" style="width:1px"></span><span class="pbt">0%</span></span></div><div class="tr alt"><span class="c1">Spam Mails</span><span class="c2">1231</span><span class="pb"><span class="pbf" style="width:2px"></span><span class="pbt">1%</span></span></div><div class="tr"><span class="c1">SPF rejects</span><span class="c2">0</span><span class="pb"><span class="pbf" style="width:0px"></span><span class="pbt">0%</span></span></div><div class="tr alt"><span class="c1">Bounces</span><span class="c2">226</span><span class="pb"><span class="pbf" style="width:1px"></span><span class="pbt">0%</span></span></div><div class="tr"><span class="c1">Virus Mails</span><span class="c2">12</span><span class="pb"><span class="pbf" style="width:0px"></span><span class="pbt">0%</span></span></div></div>
</div>
<div class="panel" style="left:215px;top:615px">
<div class="ph"><span class="pt">Outgoing Mails</span>
<svg class="tool" style="left:642px" width="16" height="16" viewBox="0 0 16 16"><rect x="0" y="0" width="16" height="16" fill="#f9fafb"/><circle cx="8" cy="8" r="7.3" fill="#fbfcfe" stroke="#c5dbef" stroke-width="1"/><path d="M3.5,7.6H12.5" stroke="#d3e3f2" stroke-width="1.2"/></svg>
<svg class="tool" style="left:664px" width="16" height="16" viewBox="0 0 16 16"><circle cx="8" cy="8" r="7.2" fill="none" stroke="#4a8ac6" stroke-width="1.2"/><path d="M7.5,2.6V12.8M2.4,7.6H13.4M7.5,2.6L13.4,7.6M2.4,7.6L7.5,12.8" stroke="#78aae0" stroke-width="1.2" fill="none" stroke-linejoin="round"/></svg>
</div>
<div class="pb1"><svg width="690" height="264" style="position:absolute;left:-1px;top:-1px"><path d="M46.5,180.5H680.5M46.5,159.5H680.5M46.5,138.5H680.5M46.5,117.5H680.5M46.5,96.5H680.5M46.5,74.5H680.5M46.5,53.5H680.5M46.5,32.5H680.5M46.5,11.5H680.5M47.5,11.5V180.5M68.5,11.5V180.5M89.5,11.5V180.5M110.5,11.5V180.5M132.5,11.5V180.5M153.5,11.5V180.5M174.5,11.5V180.5M195.5,11.5V180.5M216.5,11.5V180.5M237.5,11.5V180.5M258.5,11.5V180.5M280.5,11.5V180.5M301.5,11.5V180.5M322.5,11.5V180.5M343.5,11.5V180.5M364.5,11.5V180.5M385.5,11.5V180.5M406.5,11.5V180.5M428.5,11.5V180.5M449.5,11.5V180.5M470.5,11.5V180.5M491.5,11.5V180.5M512.5,11.5V180.5M533.5,11.5V180.5M554.5,11.5V180.5M576.5,11.5V180.5M597.5,11.5V180.5M618.5,11.5V180.5M639.5,11.5V180.5M660.5,11.5V180.5M680.5,11.5V180.5" stroke="#dcdcdc" stroke-width="1" fill="none"/><path d="M45.5,180.5L45.5,109.1L46.7,109.1L67.8,104.0L89.0,66.2L110.1,154.9L131.3,144.0L152.4,61.1L173.5,68.7L194.7,30.8L215.8,88.0L237.0,116.6L258.1,161.2L279.2,164.1L300.4,163.7L321.5,125.9L342.7,124.6L363.8,102.3L384.9,118.3L406.1,162.9L427.2,168.8L448.4,113.7L469.5,100.6L490.6,117.9L511.8,98.1L532.9,95.2L554.1,149.0L575.2,154.5L596.3,99.8L617.5,146.1L638.6,179.7L659.8,179.7L680.5,179.7L680.5,180.5Z" fill="rgba(148,174,10,0.6)" stroke="none"/><path d="M45.5,109.1L46.7,109.1L67.8,104.0L89.0,66.2L110.1,154.9L131.3,144.0L152.4,61.1L173.5,68.7L194.7,30.8L215.8,88.0L237.0,116.6L258.1,161.2L279.2,164.1L300.4,163.7L321.5,125.9L342.7,124.6L363.8,102.3L384.9,118.3L406.1,162.9L427.2,168.8L448.4,113.7L469.5,100.6L490.6,117.9L511.8,98.1L532.9,95.2L554.1,149.0L575.2,154.5L596.3,99.8L617.5,146.1L638.6,179.7L659.8,179.7L680.5,179.7" fill="none" stroke="#7b932c" stroke-width="1.2" stroke-linejoin="round"/><path d="M45.5,180.5L45.5,179.7L46.7,179.7L67.8,179.7L89.0,179.7L110.1,179.7L131.3,179.7L152.4,179.7L173.5,179.7L194.7,179.7L215.8,179.7L237.0,179.7L258.1,179.7L279.2,179.7L300.4,179.7L321.5,179.7L342.7,179.7L363.8,179.7L384.9,179.7L406.1,179.7L427.2,179.7L448.4,179.7L469.5,179.7L490.6,179.7L511.8,179.7L532.9,179.7L554.1,179.7L575.2,179.7L596.3,179.7L617.5,179.7L638.6,179.7L659.8,179.7L680.5,179.7L680.5,180.5Z" fill="rgba(17,95,166,0.6)" stroke="none"/><path d="M45.5,179.7L46.7,179.7L67.8,179.7L89.0,179.7L110.1,179.7L131.3,179.7L152.4,179.7L173.5,179.7L194.7,179.7L215.8,179.7L237.0,179.7L258.1,179.7L279.2,179.7L300.4,179.7L321.5,179.7L342.7,179.7L363.8,179.7L384.9,179.7L406.1,179.7L427.2,179.7L448.4,179.7L469.5,179.7L490.6,179.7L511.8,179.7L532.9,179.7L554.1,179.7L575.2,179.7L596.3,179.7L617.5,179.7L638.6,179.7L659.8,179.7L680.5,179.7" fill="none" stroke="#2d5f78" stroke-width="1.2" stroke-linejoin="round"/><path d="M45.5,180.5L45.5,177.6L46.7,177.6L67.8,177.6L89.0,178.0L110.1,178.9L131.3,178.4L152.4,178.0L173.5,177.6L194.7,177.6L215.8,177.6L237.0,178.0L258.1,178.9L279.2,178.9L300.4,178.0L321.5,178.0L342.7,175.9L363.8,178.0L384.9,178.4L406.1,179.3L427.2,179.3L448.4,175.9L469.5,176.8L490.6,177.6L511.8,177.6L532.9,173.8L554.1,177.6L575.2,177.6L596.3,176.8L617.5,175.9L638.6,179.7L659.8,179.7L680.5,179.7L680.5,180.5Z" fill="rgba(166,17,32,0.6)" stroke="none"/><path d="M45.5,177.6L46.7,177.6L67.8,177.6L89.0,178.0L110.1,178.9L131.3,178.4L152.4,178.0L173.5,177.6L194.7,177.6L215.8,177.6L237.0,178.0L258.1,178.9L279.2,178.9L300.4,178.0L321.5,178.0L342.7,175.9L363.8,178.0L384.9,178.4L406.1,179.3L427.2,179.3L448.4,175.9L469.5,176.8L490.6,177.6L511.8,177.6L532.9,173.8L554.1,177.6L575.2,177.6L596.3,176.8L617.5,175.9L638.6,179.7L659.8,179.7L680.5,179.7" fill="none" stroke="rgba(120,10,20,0.75)" stroke-width="1.2" stroke-linejoin="round"/><path d="M45.5,11.5V180.5H680.5M41.0,180.5H45.5M41.0,159.5H45.5M41.0,138.5H45.5M41.0,117.5H45.5M41.0,96.5H45.5M41.0,74.5H45.5M41.0,53.5H45.5M41.0,32.5H45.5M41.0,11.5H45.5M47.5,180.5V184.5M68.5,180.5V184.5M89.5,180.5V184.5M110.5,180.5V184.5M132.5,180.5V184.5M153.5,180.5V184.5M174.5,180.5V184.5M195.5,180.5V184.5M216.5,180.5V184.5M237.5,180.5V184.5M258.5,180.5V184.5M280.5,180.5V184.5M301.5,180.5V184.5M322.5,180.5V184.5M343.5,180.5V184.5M364.5,180.5V184.5M385.5,180.5V184.5M406.5,180.5V184.5M428.5,180.5V184.5M449.5,180.5V184.5M470.5,180.5V184.5M491.5,180.5V184.5M512.5,180.5V184.5M533.5,180.5V184.5M554.5,180.5V184.5M576.5,180.5V184.5M597.5,180.5V184.5M618.5,180.5V184.5M639.5,180.5V184.5M660.5,180.5V184.5M680.5,180.5V184.5" stroke="#000" stroke-width="1" fill="none"/><text x="24.5" y="184.1" text-anchor="middle" font-family="Liberation Sans" font-size="12" fill="#222">0</text><text x="24.5" y="163.0" text-anchor="middle" font-family="Liberation Sans" font-size="12" fill="#222">50</text><text x="24.5" y="141.8" text-anchor="middle" font-family="Liberation Sans" font-size="12" fill="#222">100</text><text x="24.5" y="120.7" text-anchor="middle" font-family="Liberation Sans" font-size="12" fill="#222">150</text><text x="24.5" y="99.6" text-anchor="middle" font-family="Liberation Sans" font-size="12" fill="#222">200</text><text x="24.5" y="78.5" text-anchor="middle" font-family="Liberation Sans" font-size="12" fill="#222">250</text><text x="24.5" y="57.4" text-anchor="middle" font-family="Liberation Sans" font-size="12" fill="#222">300</text><text x="24.5" y="36.2" text-anchor="middle" font-family="Liberation Sans" font-size="12" fill="#222">350</text><text x="24.5" y="15.1" text-anchor="middle" font-family="Liberation Sans" font-size="12" fill="#222">400</text><text x="47.2" y="200.0" text-anchor="middle" font-family="Liberation Sans" font-size="13" fill="#222">2020-04-01</text><text x="132.0" y="200.0" text-anchor="middle" font-family="Liberation Sans" font-size="13" fill="#222">2020-04-05</text><text x="216.9" y="200.0" text-anchor="middle" font-family="Liberation Sans" font-size="13" fill="#222">2020-04-09</text><text x="301.7" y="200.0" text-anchor="middle" font-family="Liberation Sans" font-size="13" fill="#222">2020-04-13</text><text x="386.6" y="200.0" text-anchor="middle" font-family="Liberation Sans" font-size="13" fill="#222">2020-04-17</text><text x="471.4" y="200.0" text-anchor="middle" font-family="Liberation Sans" font-size="13" fill="#222">2020-04-21</text><text x="556.2" y="200.0" text-anchor="middle" font-family="Liberation Sans" font-size="13" fill="#222">2020-04-25</text><text x="641.1" y="200.0" text-anchor="middle" font-family="Liberation Sans" font-size="13" fill="#222">2020-04-29</text></svg><div class="legend" style="top:218px"><div class="li first"><span class="dot" style="background:#94ae0a"></span>Outgoing Mails</div><div class="li"><span class="dot" style="background:#115fa6"></span>Virus Mails</div><div class="li"><span class="dot" style="background:#a61120"></span>Bounces</div></div></div>
<div class="tbl"><div class="tr"><span class="c1">Outgoing Mails</span><span class="c2">4090</span><span class="pb"><span class="pbf" style="width:280px"></span><span class="pbt">100%</span></span></div><div class="tr alt"><span class="c1">Bounces</span><span class="c2">126</span><span class="pb"><span class="pbf" style="width:9px"></span><span class="pbt">3%</span></span></div><div class="tr"><span class="c1">Virus Mails</span><span class="c2">0</span><span class="pb"><span class="pbf" style="width:0px"></span><span class="pbt">0%</span></span></div></div>
</div>
</body></html>
